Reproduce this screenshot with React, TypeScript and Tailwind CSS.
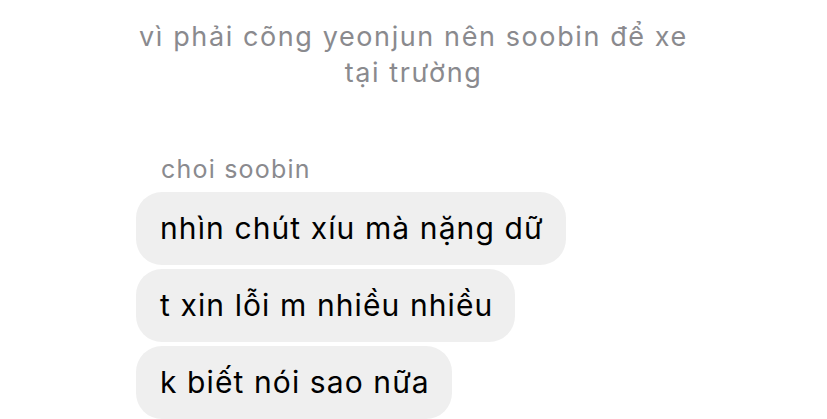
const messages = [
    "nhìn chút xíu mà nặng dữ",
    "t xin lỗi m nhiều nhiều",
    "k biết nói sao nữa",
];

const App = () => {
    return (
        <div
            className="w-[827px] h-[419px] overflow-hidden bg-white"
            style={{ fontFamily: "Inter, 'Noto Sans', sans-serif" }}
        >
            <div className="pt-[19px] text-center text-[27px] leading-[36px] tracking-[1.6px] text-[#8a8a8e]">
                vì phải cõng yeonjun nên soobin để xe
                <br />
                tại trường
            </div>
            <div className="mt-[63px] pl-[161px] text-[25px] leading-[30px] tracking-[1.2px] text-[#8a8a8e]">
                choi soobin
            </div>
            <div className="mt-[8px] flex flex-col items-start gap-[4px] pl-[136px]">
                {messages.map((msg) => (
                    <div
                        key={msg}
                        className="h-[73px] flex items-center rounded-[26px] bg-[#efefef] pl-[24px] pr-[22px] text-[30px] tracking-[1.1px] text-black"
                    >
                        {msg}
                    </div>
                ))}
            </div>
        </div>
    );
};

export default App;
